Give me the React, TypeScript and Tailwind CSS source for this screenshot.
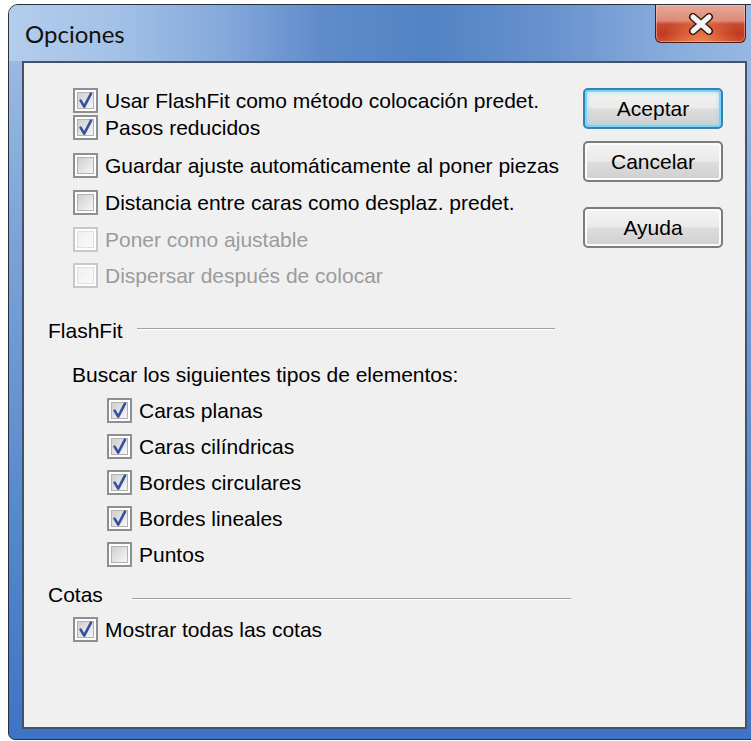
import { useId, type ReactNode } from "react";

function Box({ checked, disabled }: { checked?: boolean; disabled?: boolean }) {
  const id = "cb" + useId().replace(/[^a-zA-Z0-9]/g, "");
  return (
    <svg width="25" height="25" viewBox="0 0 25 25" className="shrink-0">
      <defs>
        <linearGradient id={id} x1="0" y1="0" x2="1" y2="1">
          <stop offset="0" stopColor={disabled ? "#efefef" : "#cdcdcd"} />
          <stop offset="1" stopColor={disabled ? "#fafafa" : "#f8f8f8"} />
        </linearGradient>
      </defs>
      <rect
        x="1"
        y="1"
        width="23"
        height="23"
        fill="#fdfdfd"
        stroke={disabled ? "#c8c8c8" : "#8e8f8f"}
        strokeWidth="2"
      />
      <rect
        x="4.5"
        y="4.5"
        width="16"
        height="16"
        fill={`url(#${id})`}
        stroke={disabled ? "#e0e0e0" : "#b2b2b2"}
        strokeWidth="1"
      />
      {checked && (
        <path
          d="M7.6 12.6 L11.2 18.6 L18 5.6"
          fill="none"
          stroke="#34509f"
          strokeWidth="2.6"
          strokeLinejoin="round"
          strokeLinecap="round"
        />
      )}
    </svg>
  );
}

function Row({
  checked,
  disabled,
  children,
  className = "",
}: {
  checked?: boolean;
  disabled?: boolean;
  children: ReactNode;
  className?: string;
}) {
  return (
    <div className={`flex h-[25px] items-center gap-[7px] whitespace-nowrap ${className}`}>
      <Box checked={checked} disabled={disabled} />
      <span className={disabled ? "text-[#9b9b9b]" : "text-black"}>{children}</span>
    </div>
  );
}

function Btn({
  primary,
  children,
  className = "",
}: {
  primary?: boolean;
  children: ReactNode;
  className?: string;
}) {
  return (
    <button
      type="button"
      className={`flex h-[41px] w-[140px] items-center justify-center rounded-[5px] border-2 bg-[linear-gradient(to_bottom,#f3f3f3_0%,#ebebeb_48%,#dddddd_52%,#cfcfcf_100%)] text-[21px] leading-none text-black ${
        primary
          ? "border-[#3c7fb1] shadow-[inset_0_0_0_2px_#72d6f7,inset_0_0_3px_4px_rgba(140,220,250,0.35)]"
          : "border-[#7c7c7c] shadow-[inset_0_0_0_2px_#fbfbfb]"
      } ${className}`}
    >
      {children}
    </button>
  );
}

function CloseGlyph() {
  return (
    <svg width="26" height="22" viewBox="0 0 26 22">
      <path d="M5 4 L21 18 M21 4 L5 18" stroke="#3b1a14" strokeWidth="8" strokeLinecap="round" />
      <path d="M5 4 L21 18 M21 4 L5 18" stroke="#f4f4f4" strokeWidth="5" strokeLinecap="round" />
    </svg>
  );
}

export default function App() {
  return (
    <div className="h-[741px] w-[751px] overflow-hidden bg-white pl-[8px] pt-[4px] font-['Liberation_Sans',Arial,sans-serif]">
      {/* window frame */}
      <div className="flex h-[736px] w-[754px] flex-col overflow-hidden rounded-tl-[10px] rounded-tr-[10px] rounded-bl-[7px] border border-[#27313d] bg-[linear-gradient(to_bottom,#a3c0e6_0%,#7ea4d8_30%,#5589cc_70%,#3d74c6_100%)]">
        {/* caption */}
        <div className="flex h-[56px] shrink-0 items-start justify-between bg-[linear-gradient(to_right,#b3cdec_0%,#a4c1e7_14%,#86aadc_28%,#5f8bca_42%,#5283c5_56%,#6892cd_72%,#88acdc_88%,#98b9e2_100%)] pl-[16px] pr-[15px]">
          <span className="pt-[17px] font-['Lato',sans-serif] text-[24px] leading-[24px] text-[#111]">
            Opciones
          </span>
          <div className="flex h-[38px] w-[91px] items-center justify-center rounded-b-[6px] border border-t-0 border-[#4d1a12] bg-[radial-gradient(ellipse_at_50%_100%,rgba(255,150,90,0.75)_0%,rgba(255,120,70,0)_60%),linear-gradient(to_bottom,#e8a898_0%,#dc8b78_42%,#c8492f_52%,#c03a22_78%,#cf5032_100%)] shadow-[inset_0_0_0_1px_rgba(255,210,200,0.45)]">
            <CloseGlyph />
          </div>
        </div>

        {/* client area */}
        <div className="flex-1 pb-[10px] pl-[13px] pr-[14px]">
          <div className="h-[668px] w-[725px] border-2 border-[#43536b] bg-[#f0f0f0] text-[21px] leading-[25px] text-black">
            <div className="grid grid-cols-[1fr_140px] pr-[22px] pt-[25px]">
              <div className="flex flex-col pl-[49px]">
                <Row checked>Usar FlashFit como método colocación predet.</Row>
                <Row checked className="mt-[2px]">
                  Pasos reducidos
                </Row>
                <Row className="mt-[13px]">Guardar ajuste automáticamente al poner piezas</Row>
                <Row className="mt-[12px]">Distancia entre caras como desplaz. predet.</Row>
                <Row disabled className="mt-[12px]">
                  Poner como ajustable
                </Row>
                <Row disabled className="mt-[11px]">
                  Dispersar después de colocar
                </Row>
              </div>
              <div className="flex flex-col">
                <Btn primary>Aceptar</Btn>
                <Btn className="mt-[12px]">Cancelar</Btn>
                <Btn className="mt-[25px]">Ayuda</Btn>
              </div>
            </div>

            {/* FlashFit group */}
            <div className="mt-[30px] flex h-[25px] items-start pl-[24px]">
              <span className="w-[89px] whitespace-nowrap">FlashFit</span>
              <div className="mt-[10px] h-[2px] w-[418px] border-t border-t-[#a0a0a0] bg-white" />
            </div>
            <div className="mt-[19px] whitespace-nowrap pl-[48px]">
              Buscar los siguientes tipos de elementos:
            </div>
            <div className="flex flex-col pl-[83px]">
              <Row checked className="mt-[11px]">
                Caras planas
              </Row>
              <Row checked className="mt-[11px]">
                Caras cilíndricas
              </Row>
              <Row checked className="mt-[11px]">
                Bordes circulares
              </Row>
              <Row checked className="mt-[11px]">
                Bordes lineales
              </Row>
              <Row className="mt-[11px]">Puntos</Row>
            </div>

            {/* Cotas group */}
            <div className="mt-[15px] flex h-[25px] items-start pl-[24px]">
              <span className="w-[84px] whitespace-nowrap">Cotas</span>
              <div className="mt-[16px] h-[2px] w-[439px] border-t border-t-[#a0a0a0] bg-white" />
            </div>
            <div className="pl-[49px]">
              <Row checked className="mt-[10px]">
                Mostrar todas las cotas
              </Row>
            </div>
          </div>
        </div>
      </div>
    </div>
  );
}
